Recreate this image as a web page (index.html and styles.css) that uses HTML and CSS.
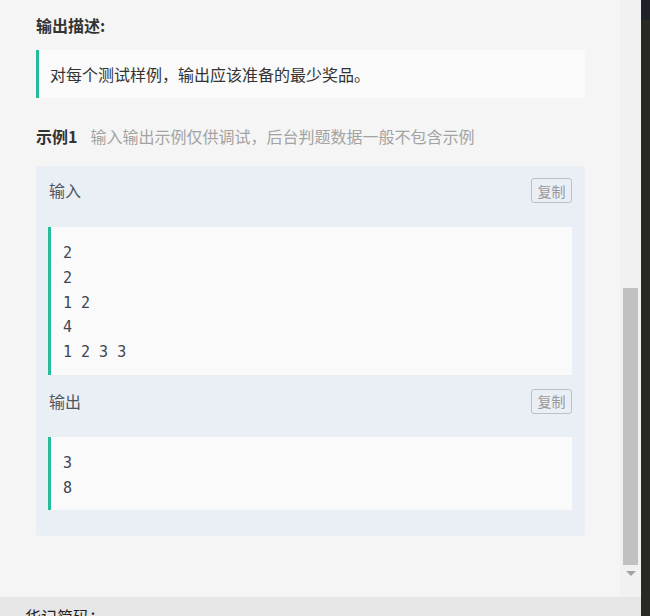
FILE: index.html
```html
<!DOCTYPE html>
<html lang="zh">
<head>
<meta charset="utf-8">
<title>示例</title>
<link rel="stylesheet" href="styles.css">
</head>
<body>
<div class="window">
  <div class="left">
    <div class="top">
      <main class="content">
        <h3 class="heading">输出描述:</h3>
        <blockquote class="quote">对每个测试样例，输出应该准备的最少奖品。</blockquote>
        <div class="sample-title"><b>示例1</b><span class="hint">输入输出示例仅供调试，后台判题数据一般不包含示例</span></div>
        <section class="sample">
          <div class="sample-head"><span class="label">输入</span><button class="copy">复制</button></div>
          <pre class="code">2
2
1 2
4
1 2 3 3</pre>
          <div class="sample-head second"><span class="label">输出</span><button class="copy">复制</button></div>
          <pre class="code">3
8</pre>
        </section>
      </main>
      <div class="scrollbar">
        <div class="track-space"></div>
        <div class="thumb"></div>
        <div class="arrow"></div>
      </div>
    </div>
    <div class="bottom-bar"><span class="bottom-text">华记简码：</span></div>
  </div>
  <div class="dark-strip"><div class="dark-top"></div></div>
</div>
</body>
</html>
```
FILE: styles.css
```css
html, body {
  margin: 0;
  padding: 0;
  width: 650px;
  height: 616px;
  overflow: hidden;
  font-family: "Noto Sans CJK SC", "Noto Sans", sans-serif;
  background: #f5f5f5;
}

.window {
  display: flex;
  width: 650px;
  height: 616px;
}

.left {
  width: 641px;
  display: flex;
  flex-direction: column;
}

.top {
  display: flex;
  height: 597px;
}

.content {
  width: 549px;
  padding: 13px 35px 0 36px;
  background: #f5f5f5;
}

.heading {
  margin: 0;
  font-size: 16px;
  line-height: 24px;
  font-weight: 700;
  color: #333;
}

.quote {
  margin: 13px 0 0 0;
  padding: 12px 11px;
  border-left: 3px solid #25bb9b;
  background: #fafafa;
  font-size: 16px;
  line-height: 24px;
  color: #333;
}

.sample-title {
  margin-top: 26px;
  font-size: 16px;
  line-height: 24px;
  display: flex;
  gap: 13px;
}

.sample-title b {
  color: #333;
  font-weight: 700;
}

.hint {
  color: #a3a3a3;
}

.sample {
  margin-top: 18px;
  background: #eaeef5;
  border-radius: 4px;
  padding: 0 13px 26px 12px;
}

.sample-head {
  display: flex;
  justify-content: space-between;
  align-items: center;
  padding: 12px 0 24px 1px;
}

.sample-head.second {
  padding-top: 14px;
  padding-bottom: 23px;
}

.label {
  font-size: 16px;
  line-height: 25px;
  color: #4f5561;
}

.copy {
  width: 41px;
  height: 25px;
  padding: 0;
  border: 1px solid #bcc1c9;
  border-radius: 3px;
  background: transparent;
  font-family: "Noto Sans CJK SC", sans-serif;
  font-size: 14px;
  line-height: 22px;
  color: #999;
}

.code {
  margin: 0;
  padding: 14px 12px 10px 12px;
  border-left: 3px solid #25bb9b;
  background: #fafafa;
  font-family: "DejaVu Sans Mono", monospace;
  font-size: 15px;
  line-height: 24.75px;
  color: #3e4450;
}

.scrollbar {
  width: 21px;
  background: #f1f1f1;
  display: flex;
  flex-direction: column;
  align-items: center;
}

.track-space {
  height: 288px;
}

.thumb {
  width: 15px;
  height: 277px;
  margin-left: -1px;
  background: #c1c1c1;
}

.arrow {
  margin-top: 6px;
  width: 0;
  height: 0;
  border-left: 5px solid transparent;
  border-right: 5px solid transparent;
  border-top: 5px solid #a3a3a3;
}

.bottom-bar {
  height: 19px;
  background: #e6e6e6;
  overflow: hidden;
  padding-left: 25px;
}

.bottom-text {
  display: block;
  margin-top: 9px;
  font-size: 16px;
  line-height: 20px;
  color: #222;
}

.dark-strip {
  width: 9px;
  background: #2a2a24;
}

.dark-top {
  height: 20px;
  background: #1f2329;
}
```
